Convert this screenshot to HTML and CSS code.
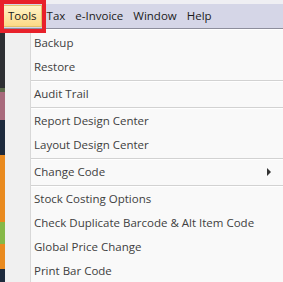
FILE: index.html
```html
<!DOCTYPE html>
<html lang="en">
<head>
  <meta charset="UTF-8">
  <meta name="viewport" content="width=device-width, initial-scale=1.0">
  <title>Tools Menu</title>
  <link rel="stylesheet" href="styles.css">
</head>
<body>

<div class="app">
  <div class="top-strip"></div>

  <!-- Main menu bar -->
  <div class="menubar">
    <span class="menu-item active">Tools</span>
    <span class="menu-item">Tax</span>
    <span class="menu-item">e-Invoice</span>
    <span class="menu-item">Window</span>
    <span class="menu-item">Help</span>
  </div>

  <div class="main">
    <!-- Application background peeking out on the left -->
    <div class="backdrop">
      <div class="seg seg-dark"></div>
      <div class="seg seg-green"></div>
      <div class="seg seg-pink"></div>
      <div class="seg seg-navy"></div>
      <div class="seg seg-orange"></div>
      <div class="seg seg-lime"></div>
      <div class="seg seg-orange2"></div>
      <div class="seg seg-dark2"></div>
    </div>

    <!-- Tools dropdown -->
    <div class="dropdown">
      <div class="item">Backup</div>
      <div class="item">Restore</div>
      <div class="sep"></div>
      <div class="item">Audit Trail</div>
      <div class="sep"></div>
      <div class="item">Report Design Center</div>
      <div class="item">Layout Design Center</div>
      <div class="sep"></div>
      <div class="item has-sub">Change Code <span class="arrow"></span></div>
      <div class="sep"></div>
      <div class="item">Stock Costing Options</div>
      <div class="item">Check Duplicate Barcode &amp; Alt Item Code</div>
      <div class="item">Global Price Change</div>
      <div class="item">Print Bar Code</div>
    </div>
  </div>

  <!-- red callout box round the Tools menu -->
  <div class="callout"></div>
</div>

</body>
</html>
```

FILE: styles.css
```css
/* Basic CSS styles */
body {
  margin: 0;
  padding: 0;
  font-family: "Open Sans", Arial, sans-serif;
  font-size: 11.5px;
  background-color: #f9f9f9;
  overflow: hidden;
}
.app {
  position: relative;
  width: 283px;
  height: 282px;
  overflow: hidden;
}
.top-strip {
  height: 4px;
  background-color: #efeff3;
}
.menubar {
  height: 24px;
  display: flex;
  align-items: center;
  padding-left: 3px;
  background-color: #d5d6e7;
  border-bottom: 1px solid #8d8e9c;
  color: #1b1b1b;
}
.menu-item {
  padding: 0 4px;
  line-height: 20px;
  border: 1px solid transparent;
}
.menu-item.active {
  background: linear-gradient(#fff4c8, #fdd985);
  border-color: #e3c26a;
}
.main {
  display: flex;
  height: 253px;
}
.backdrop {
  width: 5px;
  display: flex;
  flex-direction: column;
}
.seg-dark { height: 59px; background-color: #2e2f33; }
.seg-green { height: 4px; background-color: #5d6b4c; }
.seg-pink { height: 28px; background-color: #a86a7c; }
.seg-navy { height: 35px; background-color: #1d2a3c; }
.seg-orange { height: 67px; background-color: #e98a1f; }
.seg-lime { height: 22px; background-color: #86b848; }
.seg-orange2 { height: 25px; background-color: #e98a1f; }
.seg-dark2 { flex: 1; background-color: #1d2a3c; }
.dropdown {
  flex: 1;
  padding-top: 1px;
  border-top: 1px solid #ffffff;
  background: linear-gradient(to right, #f0f0f0 25px, #d8d8d8 25px, #d8d8d8 26px, #f9f9f9 26px);
  color: #404040;
}
.item {
  height: 24px;
  line-height: 24px;
  padding-left: 29px;
  white-space: nowrap;
  position: relative;
}
.sep {
  height: 1px;
  margin: 1px 0 0 26px;
  background-color: #d2d2d2;
  border-bottom: 1px solid #ffffff;
}
.arrow {
  position: absolute;
  left: 262px;
  top: 8px;
  width: 0;
  height: 0;
  border-top: 4px solid transparent;
  border-bottom: 4px solid transparent;
  border-left: 4px solid #333;
}
.callout {
  position: absolute;
  left: 0;
  top: 0;
  width: 38px;
  height: 25px;
  border: 4px solid #e8212b;
}
```
